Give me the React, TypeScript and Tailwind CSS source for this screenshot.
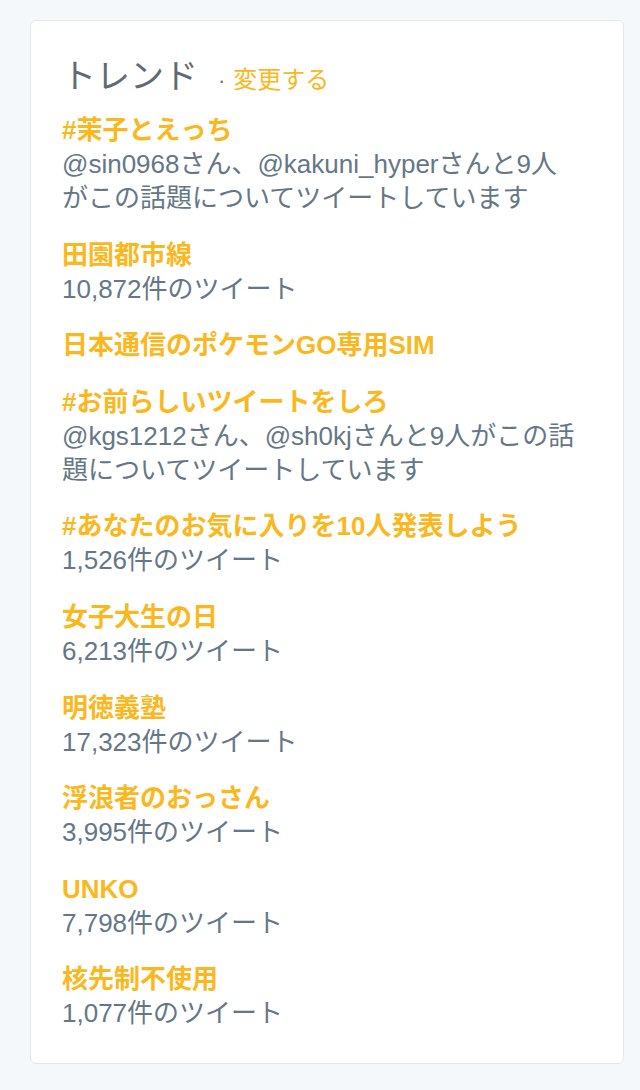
import React from "react";

type Trend = {
    name: string;
    lines: string[];
};

const trends: Trend[] = [
    { name: "#茉子とえっち", lines: ["@sin0968さん、@kakuni_hyperさんと9人", "がこの話題についてツイートしています"] },
    { name: "田園都市線", lines: ["10,872件のツイート"] },
    { name: "日本通信のポケモンGO専用SIM", lines: [] },
    { name: "#お前らしいツイートをしろ", lines: ["@kgs1212さん、@sh0kjさんと9人がこの話", "題についてツイートしています"] },
    { name: "#あなたのお気に入りを10人発表しよう", lines: ["1,526件のツイート"] },
    { name: "女子大生の日", lines: ["6,213件のツイート"] },
    { name: "明徳義塾", lines: ["17,323件のツイート"] },
    { name: "浮浪者のおっさん", lines: ["3,995件のツイート"] },
    { name: "UNKO", lines: ["7,798件のツイート"] },
    { name: "核先制不使用", lines: ["1,077件のツイート"] },
];

const TrendItem: React.FC<{ trend: Trend }> = ({ trend }) => {
    return (
        <li className="mb-[22.6px]">
            <div className="text-[26px] leading-[34px] font-bold text-[#fab81e]">{trend.name}</div>
            {trend.lines.map((l, i) => (
                <div key={i} className="text-[26px] leading-[34px] text-[#657786] whitespace-nowrap">{l}</div>
            ))}
        </li>
    );
};

export default function App() {
    return (
        <div
            className="w-[640px] h-[1090px] bg-[#f5f8fa] pt-[20px] pl-[30px] pr-[16px]"
            style={{ fontFamily: '"Liberation Sans", "Noto Sans CJK JP", sans-serif' }}
        >
            <div className="bg-white border border-[#e1e8ed] rounded-[6px] h-[1044px] pl-[31px] pr-4 pt-[34px]">
                {/* header: title · change link */}
                <div className="flex items-baseline mb-[15px]">
                    <span className="text-[34px] leading-[42px] text-[#5f6b74]">トレンド</span>
                    <span className="text-[22px] text-[#66757f] ml-[20px] mr-[8px]">·</span>
                    <span className="text-[24px] text-[#fab81e]">変更する</span>
                </div>
                <ul>
                    {trends.map((t, i) => (
                        <TrendItem key={i} trend={t} />
                    ))}
                </ul>
            </div>
        </div>
    );
}
